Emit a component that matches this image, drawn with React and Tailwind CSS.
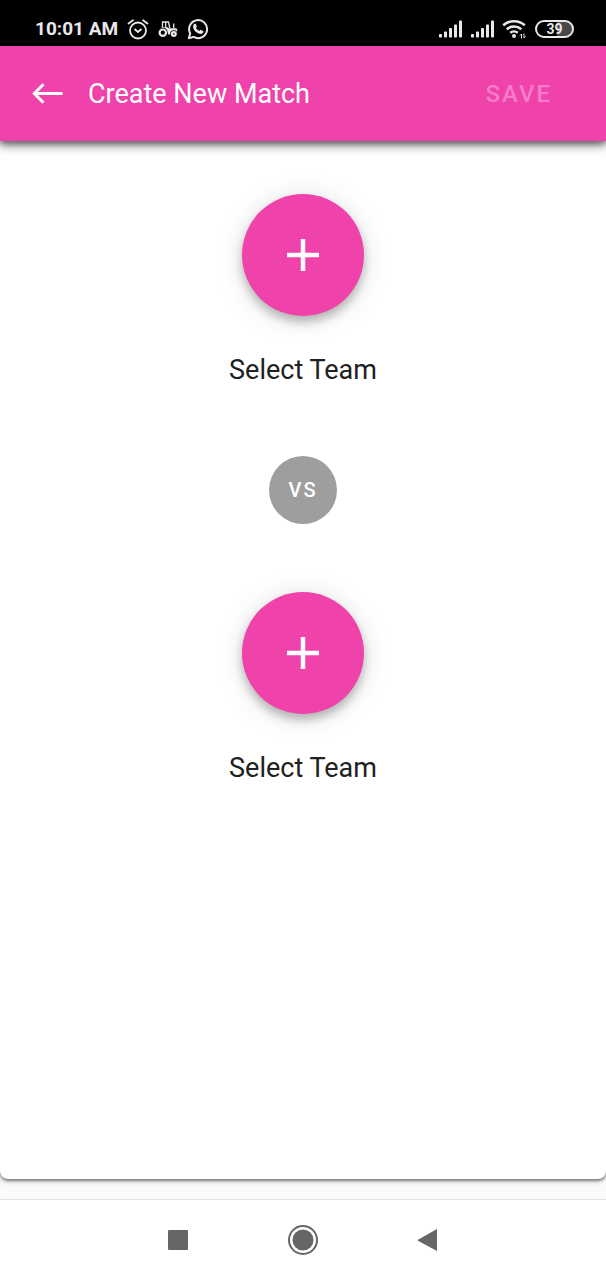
import React from "react";

function AlarmIcon() {
  return (
    <svg width="22" height="22" viewBox="0 0 22 22" fill="none" stroke="currentColor" strokeWidth="1.8" aria-hidden="true">
      <circle cx="11" cy="12.500" r="8" />
      <path d="M1.500 5.500 6 2.200M20.500 5.500 16 2.200" strokeLinecap="round" />
      <path d="m7.500 11 3.500 3 3.500-3" />
    </svg>
  );
}

function TractorIcon() {
  return (
    <svg width="20" height="18" viewBox="0 0 20 18" fill="none" stroke="currentColor" aria-hidden="true">
      <path d="M4.500 7.500V2h6l1.300 6M7.700 2v5.500" strokeWidth="1.300" />
      <path d="M15.700 3.500V8" strokeWidth="1.300" />
      <path d="M1.500 8.800 4 7.200h5.500l1.500 1h7.300l.9 1.300v5h-9l-1.700-4Z" fill="currentColor" stroke="none" />
      <circle cx="4.800" cy="12.500" r="4.800" fill="#000" stroke="none" />
      <circle cx="4.800" cy="12.700" r="3.200" strokeWidth="2.200" />
      <circle cx="15.800" cy="14" r="3.700" fill="#000" stroke="none" />
      <circle cx="15.800" cy="14" r="1.900" strokeWidth="2.200" />
    </svg>
  );
}

function WhatsAppIcon() {
  return (
    <svg width="22" height="22" viewBox="0 0 22 22" fill="none" aria-hidden="true">
      <path d="M1.800 20.200 3.200 15.400A9 9 0 1 1 6.600 18.900Z" stroke="currentColor" strokeWidth="2" strokeLinejoin="round" />
      <path
        fill="currentColor"
        d="M7.600 5.800c.5-.3 1-.2 1.200.2l1 2.200c.1.400 0 .7-.9 1.600.8 1.500 1.900 2.500 3.500 3.200.8-1 1.100-1.300 1.500-1.100l2.200 1.100c.4.200.4.700.2 1.300-.5 1.200-1.900 1.800-3.200 1.600-3.400-.5-6.700-3.800-7-6.900-.1-1.300.5-2.600 1.500-3.200Z"
      />
    </svg>
  );
}

function SignalIcon() {
  return (
    <svg width="24" height="18" viewBox="0 0 24 18" fill="currentColor" aria-hidden="true">
      <rect x="1" y="14" width="3" height="3.500" rx=".8" />
      <rect x="6" y="11.500" width="3" height="6" rx=".8" />
      <rect x="11" y="8" width="3" height="9.500" rx=".8" />
      <rect x="16" y="4.500" width="3" height="13" rx=".8" />
      <rect x="21" y=".5" width="3" height="17" rx=".8" />
    </svg>
  );
}

function WifiIcon() {
  return (
    <svg width="25" height="20" viewBox="0 0 25 20" fill="none" stroke="currentColor" aria-hidden="true">
      <path d="M1.200 6.200a16.500 16.500 0 0 1 21.600 0" strokeWidth="2.500" />
      <path d="M4.700 10.200a11.500 11.500 0 0 1 14.600 0" strokeWidth="2.500" />
      <path d="M8.200 13.800a6.500 6.500 0 0 1 7.600 0" strokeWidth="2.300" />
      <circle cx="12" cy="17" r="2" fill="currentColor" stroke="none" />
      <path d="M19.500 19.500v-4.500l-1.500 1.500M22 14.500V19l1.500-1.500" strokeWidth="1" />
    </svg>
  );
}

function StatusBar() {
  return (
    <div className="flex h-[46px] items-center justify-between bg-black pt-3 pr-8 pl-[35px] text-[#e8e8e8]">
      <div className="flex items-center gap-[9px]">
        <span className="text-[19px] leading-6 font-bold">10:01 AM</span>
        <AlarmIcon />
        <TractorIcon />
        <WhatsAppIcon />
      </div>
      <div className="flex items-center gap-2">
        <SignalIcon />
        <SignalIcon />
        <WifiIcon />
        <div className="flex h-[18px] w-[39px] items-center justify-center rounded-full border-2 border-current bg-[linear-gradient(90deg,#000_58%,#484848_58%)] text-sm leading-none font-bold">
          39
        </div>
      </div>
    </div>
  );
}

function Header() {
  return (
    <header className="relative flex h-[95px] items-center bg-[#ef42aa] pr-[54px] pl-8 text-white shadow-[0_4px_10px_rgba(0,0,0,0.5),0_3px_5px_rgba(0,0,0,0.3)]">
      <button type="button" aria-label="Back" className="mr-[25px]">
        <svg width="31" height="22" viewBox="0 0 31 22" fill="none" stroke="currentColor" strokeWidth="3" aria-hidden="true">
          <path d="M30.500 10.500H2.500M11.500 1.300 2.300 10.500l9.200 9.200" />
        </svg>
      </button>
      <h1 className="flex-1 text-[27px] leading-8">Create New Match</h1>
      <button type="button" disabled className="text-2xl leading-8 font-medium tracking-[2px] text-[#f77cc9]">
        SAVE
      </button>
    </header>
  );
}

function TeamPicker({ id }) {
  return (
    <div className="flex flex-col items-center gap-9">
      <button
        type="button"
        aria-labelledby={id}
        className="flex size-[122px] items-center justify-center rounded-full bg-[#ef42aa] text-white shadow-[0_6px_10px_rgba(0,0,0,0.24),0_3px_28px_rgba(0,0,0,0.13)]"
      >
        <svg width="32" height="32" viewBox="0 0 32 32" fill="none" stroke="currentColor" strokeWidth="4.500" aria-hidden="true">
          <path d="M16 0v32M0 16h32" />
        </svg>
      </button>
      <span id={id} className="text-[27px] leading-9 text-[#212121]">
        Select Team
      </span>
    </div>
  );
}

function NavBar() {
  return (
    <nav className="flex h-[81px] items-center justify-center gap-[95px] border-t border-[#e4e4e4] bg-white pr-px text-[#666]">
      <button type="button" aria-label="Recent apps" className="flex w-[30px] justify-center">
        <svg width="20" height="20" viewBox="0 0 20 20" fill="currentColor" aria-hidden="true">
          <rect width="20" height="20" rx="1" />
        </svg>
      </button>
      <button type="button" aria-label="Home">
        <svg width="30" height="30" viewBox="0 0 30 30" aria-hidden="true">
          <circle cx="15" cy="15" r="14" fill="none" stroke="currentColor" strokeWidth="2" />
          <circle cx="15" cy="15" r="10.500" fill="currentColor" />
        </svg>
      </button>
      <button type="button" aria-label="Previous" className="flex w-[30px] justify-center">
        <svg width="20" height="22" viewBox="0 0 20 22" fill="currentColor" aria-hidden="true">
          <path d="M19 0v22L0 11.700v-1Z" />
        </svg>
      </button>
    </nav>
  );
}

export default function App() {
  return (
    <div className="flex min-h-screen flex-col bg-[#fafafa] font-[Roboto,sans-serif]">
      <StatusBar />
      <Header />
      <main className="mb-5 flex flex-1 flex-col items-center rounded-b-lg bg-white pt-[53px] shadow-[0_2px_3px_rgba(0,0,0,0.45),0_3px_6px_rgba(0,0,0,0.12)]">
        <TeamPicker id="first-team" />
        <div className="my-[68px] flex size-[68px] items-center justify-center rounded-full bg-[#9e9e9e] text-xl font-medium tracking-[2px] text-white">
          VS
        </div>
        <TeamPicker id="second-team" />
      </main>
      <NavBar />
    </div>
  );
}
